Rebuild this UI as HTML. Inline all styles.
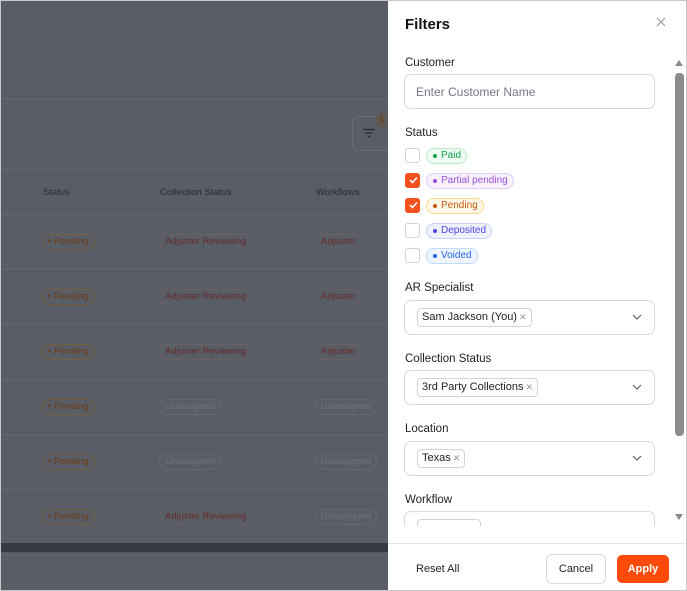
<!DOCTYPE html>
<html><head><style>
*{box-sizing:border-box;margin:0;padding:0}
body{width:687px;height:591px;overflow:hidden;font-family:"Liberation Sans",sans-serif;background:#c8c8c8;position:relative}
#ov{position:absolute;left:1px;top:1px;width:387px;height:589px;background:#585d66}
.hl{position:absolute;left:0;width:387px;height:1px;background:#626771}
.th{position:absolute;font-size:9.5px;color:#252a33}
.pill{position:absolute;font-size:9.5px;height:16px;line-height:14px;border:1px solid;border-radius:8px;padding:0 5px;white-space:nowrap;background:#595d66}
.pp{color:#6e3d16;border-color:#756040}
.ar{color:#652c28;border-color:#6c5f62}
.un{color:#6c7282;border-color:#646a74}
#panel{position:absolute;left:388px;top:1px;width:298px;height:589px;background:#fff}
.lbl{position:absolute;left:17px;font-size:11.5px;color:#222}
.inp{position:absolute;left:16px;width:251px;height:35px;border:1px solid #d6d9e0;border-radius:7px}
.tag{position:absolute;left:12px;top:7px;height:19px;border:1px solid #d0d3da;border-radius:4px;font-size:11px;line-height:17px;padding:0 4px;color:#222;white-space:nowrap}
.tag i{font-style:normal;color:#999;font-size:9px;margin-left:2px}
.chev{position:absolute;right:12px;top:13px}
.cb{position:absolute;left:17px;width:15px;height:15px;border:1px solid #cfd3da;border-radius:3px}
.cb.on{background:#f4511e;border-color:#f4511e}
.sp{position:absolute;left:38px;height:16px;border:1px solid;border-radius:8px;font-size:10px;line-height:14px;padding:0 5px 0 14px;white-space:nowrap}
.sp:before{content:"";position:absolute;left:6px;top:5px;width:4px;height:4px;border-radius:50%;background:currentColor}
</style></head><body>
<div id="ov">
<div class="hl" style="top:97px"></div>
<div style="position:absolute;left:351px;top:115px;width:40px;height:35px;border:1px solid #686e78;border-radius:6px"></div>
<svg style="position:absolute;left:361px;top:127px" width="14" height="10"><path d="M1 1.5h12M3.5 5h7M5.5 8.5h3" stroke="#272c36" stroke-width="1.3"/></svg>
<div style="position:absolute;left:374px;top:112px;width:15px;height:15px;border-radius:8px;background:#5e5a55;color:#6e3d16;font-size:9px;font-weight:bold;padding:1px 0 0 4px">1</div>
<div class="hl" style="top:168px"></div>
<div class="th" style="left:42px;top:186px">Status</div>
<div class="th" style="left:159px;top:186px">Collection Status</div>
<div class="th" style="left:315px;top:186px">Workflows</div>
<div class="hl" style="top:213px"></div>
<div class="hl" style="top:268px"></div>
<div class="hl" style="top:323px"></div>
<div class="hl" style="top:378px"></div>
<div class="hl" style="top:433px"></div>
<div class="hl" style="top:488px"></div>
<div style="position:absolute;left:0;top:542px;width:387px;height:9px;background:#353a42"></div>
<div class="hl" style="top:553px"></div>
</div>
<div id="panel">
<div style="position:absolute;left:17px;top:15px;font-size:15px;font-weight:bold;color:#111">Filters</div>
<svg style="position:absolute;left:268px;top:16px" width="10" height="10"><path d="M1 1l8 8M9 1l-8 8" stroke="#999" stroke-width="1.2"/></svg>
<div class="lbl" style="top:56px">Customer</div>
<div class="inp" style="top:73px"><span style="position:absolute;left:11px;top:10px;font-size:12px;color:#737884">Enter Customer Name</span></div>
<div class="lbl" style="top:126px">Status</div>
<div class="cb" style="top:147px"></div><div class="sp" style="top:147px;color:#16a34a;border-color:#b9ecc9;background:#effcf3">Paid</div>
<div class="cb on" style="top:172px"></div><div class="sp" style="top:172px;color:#9a4fe0;border-color:#e2ccf8;background:#f8f1fe">Partial pending</div>
<div class="cb on" style="top:197px"></div><div class="sp" style="top:197px;color:#c2580c;border-color:#fcd98a;background:#fff8e8">Pending</div>
<div class="cb" style="top:222px"></div><div class="sp" style="top:222px;color:#4f46e5;border-color:#c9d2fa;background:#eef1fe">Deposited</div>
<div class="cb" style="top:247px"></div><div class="sp" style="top:247px;color:#2563eb;border-color:#bfdbfe;background:#eff6ff">Voided</div>
<svg style="position:absolute;left:21px;top:175px" width="9" height="8"><path d="M1 4l2.5 2.5L8 1.5" stroke="#fff" stroke-width="1.6" fill="none"/></svg>
<svg style="position:absolute;left:21px;top:200px" width="9" height="8"><path d="M1 4l2.5 2.5L8 1.5" stroke="#fff" stroke-width="1.6" fill="none"/></svg>
<div class="lbl" style="top:281px">AR Specialist</div>
<div class="inp" style="top:299px"><div class="tag">Sam Jackson (You)<i>✕</i></div><svg class="chev" width="10" height="6"><path d="M1 1l4 4 4-4" stroke="#555" fill="none"/></svg></div>
<div class="lbl" style="top:352px">Collection Status</div>
<div class="inp" style="top:369px"><div class="tag">3rd Party Collections<i>✕</i></div><svg class="chev" width="10" height="6"><path d="M1 1l4 4 4-4" stroke="#555" fill="none"/></svg></div>
<div class="lbl" style="top:422px">Location</div>
<div class="inp" style="top:440px"><div class="tag">Texas<i>✕</i></div><svg class="chev" width="10" height="6"><path d="M1 1l4 4 4-4" stroke="#555" fill="none"/></svg></div>
<div class="lbl" style="top:493px">Workflow</div>
<div style="position:absolute;left:16px;top:510px;width:251px;height:15px;overflow:hidden"><div class="inp" style="top:0;left:0"><div class="tag" style="width:64px"></div></div></div>
<div style="position:absolute;left:0;top:542px;width:298px;height:1px;background:#e8e8ec"></div>
<div style="position:absolute;left:28px;top:562px;font-size:11px;color:#222">Reset All</div>
<div style="position:absolute;left:158px;top:553px;width:60px;height:30px;border:1px solid #d6d9e0;border-radius:6px;font-size:11px;display:flex;align-items:center;justify-content:center;color:#222">Cancel</div>
<div style="position:absolute;left:229px;top:554px;width:52px;height:28px;background:#ff4a0a;border-radius:5px;font-size:11px;font-weight:bold;display:flex;align-items:center;justify-content:center;color:#fff">Apply</div>
<svg style="position:absolute;left:286px;top:58px" width="10" height="8"><path d="M1 7L5 1 9 7z" fill="#888"/></svg>
<div style="position:absolute;left:287px;top:72px;width:9px;height:363px;background:#8c8c8c;border-radius:4px"></div>
<svg style="position:absolute;left:286px;top:512px" width="10" height="8"><path d="M1 1L5 7 9 1z" fill="#888"/></svg>
</div>
<div style="position:absolute;left:0;top:0">
<div class="pill pp" style="left:42px;top:234px">• Pending</div><div class="pill ar" style="left:159px;top:234px">Adjuster Reviewing</div><div class="pill ar" style="left:315px;top:234px">Adjuster</div>
<div class="pill pp" style="left:42px;top:289px">• Pending</div><div class="pill ar" style="left:159px;top:289px">Adjuster Reviewing</div><div class="pill ar" style="left:315px;top:289px">Adjuster</div>
<div class="pill pp" style="left:42px;top:344px">• Pending</div><div class="pill ar" style="left:159px;top:344px">Adjuster Reviewing</div><div class="pill ar" style="left:315px;top:344px">Adjuster</div>
<div class="pill pp" style="left:42px;top:399px">• Pending</div><div class="pill un" style="left:159px;top:399px">Unassigned</div><div class="pill un" style="left:315px;top:399px">Unassigned</div>
<div class="pill pp" style="left:42px;top:454px">• Pending</div><div class="pill un" style="left:159px;top:454px">Unassigned</div><div class="pill un" style="left:315px;top:454px">Unassigned</div>
<div class="pill pp" style="left:42px;top:509px">• Pending</div><div class="pill ar" style="left:159px;top:509px">Adjuster Reviewing</div><div class="pill un" style="left:315px;top:509px">Unassigned</div>
</div>
</body></html>
